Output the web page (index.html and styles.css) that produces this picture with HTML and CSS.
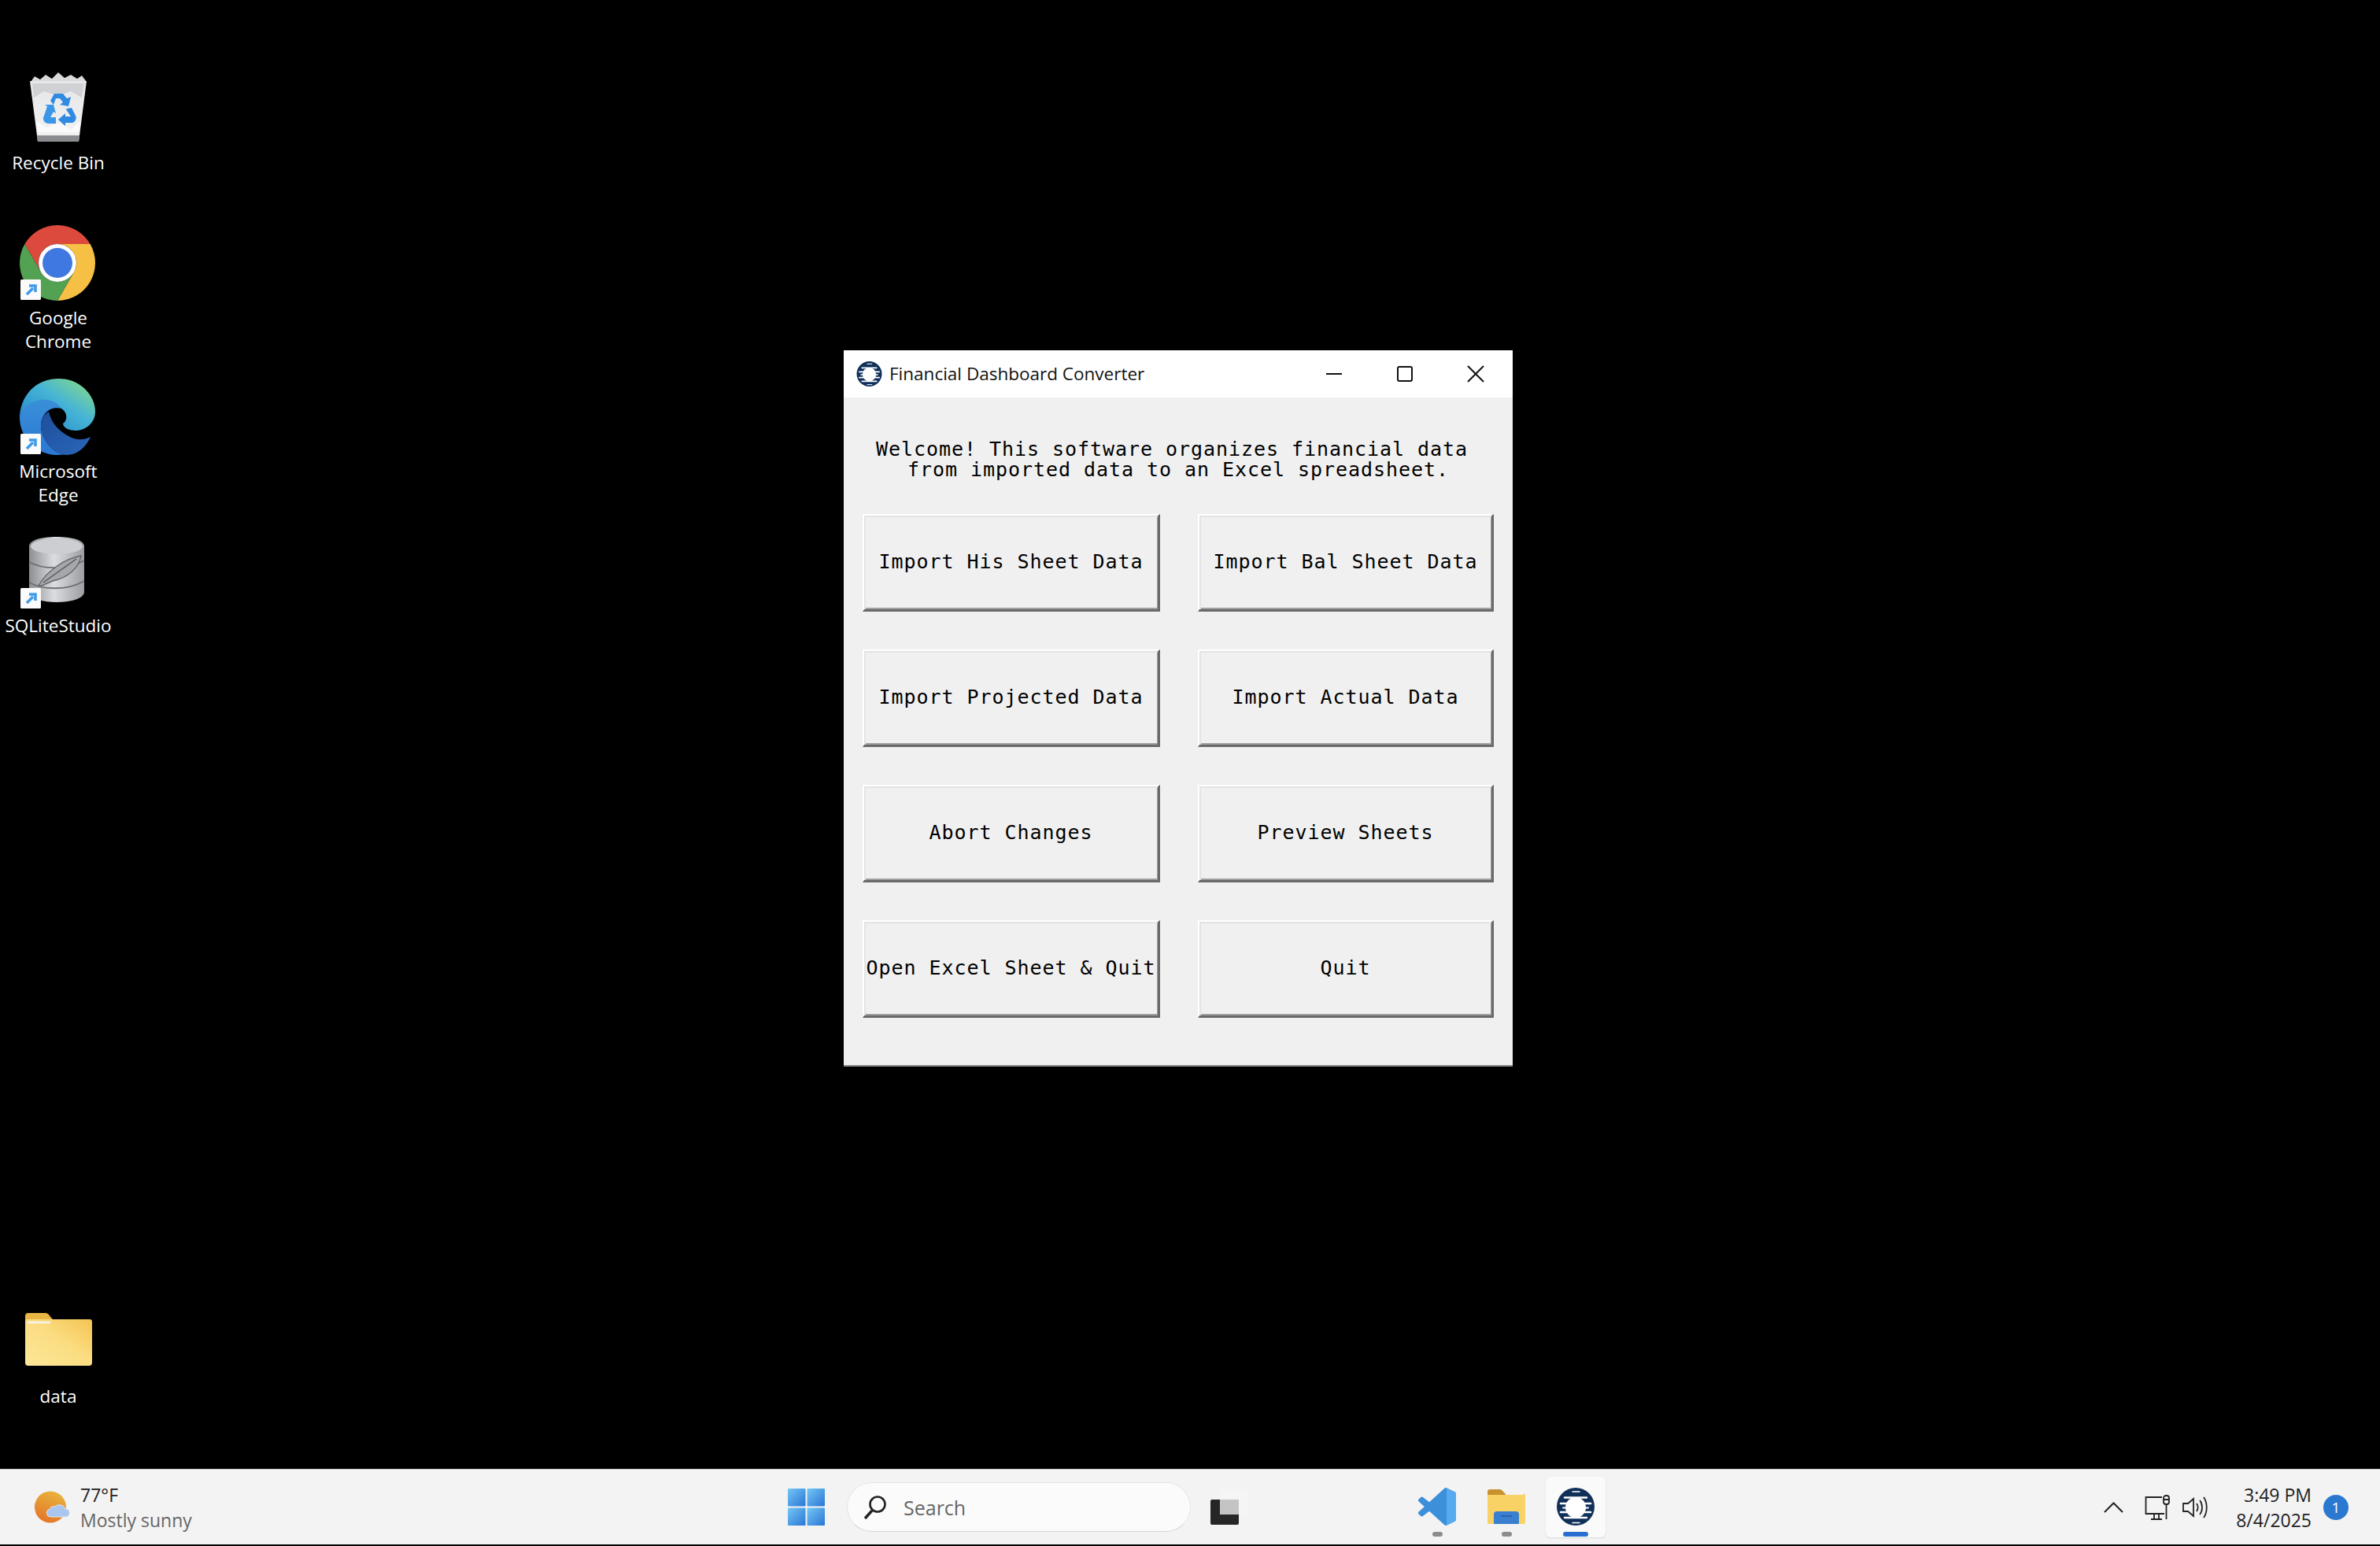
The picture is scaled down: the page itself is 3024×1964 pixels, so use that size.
FILE: index.html
```html
<!DOCTYPE html>
<html lang="en">

<head>
    <meta charset="utf-8">
    <title>Financial Dashboard Converter</title>
    <link rel="stylesheet" href="styles.css">
</head>

<body>
    <svg class="defs" width="0" height="0">
        <defs>
            <linearGradient id="edgeTop" x1="0" y1="1" x2="1" y2="0">
                <stop offset="0" stop-color="#1f7fc8"/>
                <stop offset="0.55" stop-color="#45b4d6"/>
                <stop offset="1" stop-color="#8fe07c"/>
            </linearGradient>
            <linearGradient id="edgeBody" x1="0" y1="0" x2="0" y2="1">
                <stop offset="0" stop-color="#3a8fd8"/>
                <stop offset="1" stop-color="#2a78d4"/>
            </linearGradient>
            <linearGradient id="edgeArm" x1="0" y1="0" x2="1" y2="1">
                <stop offset="0" stop-color="#1d4f9c"/>
                <stop offset="1" stop-color="#2b66b8"/>
            </linearGradient>
            <linearGradient id="binGlass" x1="0" y1="0" x2="0" y2="1">
                <stop offset="0" stop-color="#e6e7e9"/>
                <stop offset="1" stop-color="#f2f2f3"/>
            </linearGradient>
            <linearGradient id="dbBody" x1="0" y1="0" x2="1" y2="0">
                <stop offset="0" stop-color="#8d8e93"/>
                <stop offset="0.45" stop-color="#dcdde1"/>
                <stop offset="1" stop-color="#9c9da2"/>
            </linearGradient>
            <linearGradient id="folderFront" x1="0" y1="1" x2="1" y2="0">
                <stop offset="0" stop-color="#fde79a"/>
                <stop offset="0.55" stop-color="#fbdc80"/>
                <stop offset="1" stop-color="#f4c452"/>
            </linearGradient>
            <linearGradient id="sunDisc" x1="0.7" y1="0" x2="0.3" y2="1">
                <stop offset="0" stop-color="#e8b53c"/>
                <stop offset="1" stop-color="#e4742a"/>
            </linearGradient>
            <linearGradient id="startPane" x1="0" y1="0" x2="1" y2="1">
                <stop offset="0" stop-color="#74c7f5"/>
                <stop offset="1" stop-color="#2a76d4"/>
            </linearGradient>
            <symbol id="shortcut" viewBox="0 0 26 26">
                <rect width="26" height="26" rx="1.5" fill="#fbfbfb"/>
                <path d="M8 19 16 11M11 8h8v8" fill="none" stroke="#3f9be8" stroke-width="3.6"/>
            </symbol>
            <symbol id="fdcLogo" viewBox="0 0 48 48">
                <circle cx="24" cy="24" r="24" fill="#10305a"/>
                <ellipse cx="24" cy="25" rx="13" ry="13" fill="#fff"/>
                <g stroke="#fff" stroke-linecap="round" fill="none">
                    <path d="M20 5h9" stroke-width="1.500"/>
                    <path d="M10 12.500h28" stroke-width="2.400"/>
                    <path d="M5 20h38" stroke-width="2.600"/>
                    <path d="M8 25.500h32" stroke-width="2"/>
                    <path d="M5 31h38" stroke-width="2.600"/>
                    <path d="M10 38h28" stroke-width="2.400"/>
                    <path d="M20 44.500h9" stroke-width="1.500"/>
                </g>
            </symbol>
        </defs>
    </svg>

    <main class="desktop">
        <div class="desk-icon bin">
            <svg width="72" height="88" viewBox="0 0 72 88">
                <path d="M1 12 6 5l7 4 7-6 8 5 8-8 8 7 8-4 8 5 6-4 6 8-4 4H5z" fill="#d9dadc"/>
                <path d="M0 11h72l-10 77H10z" fill="url(#binGlass)"/>
                <path d="M3 14h66l-3 18-14-8-16 6-18-6-13 8z" fill="#cfd1d4"/>
                <path d="M8 62l14 8 14-6 16 8 12-10-2 14H10z" fill="#fafafa"/>
                <path d="M9 80h54l-1 8H10z" fill="#8b8c8f"/>
                <path d="M26 36 31 27h11l5 6 5-2-3 12-11-2 4-3-4-5h-5l-3 8z" fill="#2f8ae0"/>
                <path d="M22 43l-3-2 11 0 3 11-3-2-4 7h7v8h-9c-5 0-9-5-6-10z" fill="#3a96e6"/>
                <path d="M47 46l6-1 5 10c2 4-1 9-5 9h-8v4l-9-8 9-8v4h7l-6-9z" fill="#2f8ae0"/>
            </svg>
            <span>Recycle Bin</span>
        </div>

        <div class="desk-icon chrome">
            <svg width="98" height="97" viewBox="0 0 98 97">
                <path d="M48 24H89.570A48 48 0 0 0 6.430 24L27.200 60A24 24 0 0 1 48 24Z" fill="#db4a3c"/>
                <path d="M48 24H89.570A48 48 0 0 1 48 96L68.800 60A24 24 0 0 0 48 24Z" fill="#f5c043"/>
                <path d="M6.430 24A48 48 0 0 0 48 96L68.800 60A24 24 0 0 1 27.200 60Z" fill="#53a253"/>
                <circle cx="48" cy="48" r="24" fill="#fff"/>
                <circle cx="48" cy="48" r="19" fill="#3f78e0"/>
                <use href="#shortcut" x="1" y="69" width="26" height="26"/>
            </svg>
            <span>Google<br>Chrome</span>
        </div>

        <div class="desk-icon edge">
            <svg width="98" height="97" viewBox="0 0 98 97">
                <path d="M0 47C2 19 23 0 49 0C78 0 96 22 96 42C96 56 84 66 71 66C62 66 55 62 55 57C61 53 61 43 53 38C38 26 12 28 0 47Z" fill="url(#edgeTop)"/>
                <path d="M0 47C8 26 40 18 53 38C38 34 27 46 27 60C27 76 40 92 58 96C52 97 48 97 46 97C20 96 -1 74 0 47Z" fill="url(#edgeBody)"/>
                <path d="M37 42C30 46 27 52 27 60C27 78 42 97 60 97C72 97 84 88 90 74C82 78 72 79 62 73C50 67 40 56 37 42Z" fill="url(#edgeArm)"/>
                <use href="#shortcut" x="1" y="70" width="26" height="26"/>
            </svg>
            <span>Microsoft<br>Edge</span>
        </div>

        <div class="desk-icon sqlite">
            <svg width="98" height="91" viewBox="0 0 98 91">
                <path d="M12 12C12 4 28 0 47 0S82 4 82 12V70C82 78 66 83 47 83S12 78 12 70Z" fill="url(#dbBody)"/>
                <ellipse cx="47" cy="12" rx="33" ry="10" fill="#cdced2"/>
                <path d="M12 32C30 42 62 42 82 30M12 58C30 68 62 68 82 56" fill="none" stroke="#6f7074" stroke-width="2"/>
                <path d="M24 62C34 44 56 28 78 24C76 38 62 52 42 56L28 62Z" fill="#a6a7ab" stroke="#66676b" stroke-width="1.500"/>
                <path d="M30 58 72 28" stroke="#55565a" stroke-width="1.500"/>
                <use href="#shortcut" x="1" y="65" width="26" height="26"/>
            </svg>
            <span>SQLiteStudio</span>
        </div>

        <div class="desk-icon folder">
            <svg width="85" height="67" viewBox="0 0 85 67">
                <path d="M0 4A4 4 0 0 1 4 0H26C29 0 30 2 33 6L36 9H30V20H0Z" fill="#e9b643"/>
                <path d="M0 11A3 3 0 0 1 3 8H82A3 3 0 0 1 85 11V63A4 4 0 0 1 81 67H4A4 4 0 0 1 0 63Z" fill="url(#folderFront)"/>
                <path d="M3 12H32" stroke="#f4f3ee" stroke-width="2.500"/>
            </svg>
            <span>data</span>
        </div>

        <section class="app-window">
            <header class="title-bar">
                <svg class="title-logo" width="33" height="32"><use href="#fdcLogo"/></svg>
                <span class="title-text">Financial Dashboard Converter</span>
                <div class="title-controls">
                    <button class="control">
                        <svg width="20" height="20" viewBox="0 0 20 20"><path d="M0 10H20" stroke="#111" stroke-width="2"/></svg>
                    </button>
                    <button class="control">
                        <svg width="20" height="20" viewBox="0 0 20 20"><rect x="1" y="1" width="18" height="18" rx="2" fill="none" stroke="#111" stroke-width="2"/></svg>
                    </button>
                    <button class="control">
                        <svg width="22" height="22" viewBox="0 0 22 22"><path d="M1 1 21 21M21 1 1 21" stroke="#111" stroke-width="2"/></svg>
                    </button>
                </div>
            </header>

            <div class="window-body">
                <p class="welcome">Welcome! This software organizes financial data 
from imported data to an Excel spreadsheet.</p>
                <div class="button-grid">
                    <button class="tk-button">Import His Sheet Data</button>
                    <button class="tk-button">Import Bal Sheet Data</button>
                    <button class="tk-button">Import Projected Data</button>
                    <button class="tk-button">Import Actual Data</button>
                    <button class="tk-button">Abort Changes</button>
                    <button class="tk-button">Preview Sheets</button>
                    <button class="tk-button">Open Excel Sheet &amp; Quit</button>
                    <button class="tk-button">Quit</button>
                </div>
            </div>
        </section>
    </main>

    <footer class="taskbar">
        <div class="weather">
            <svg width="44" height="41" viewBox="0 0 44 41">
                <circle cx="20" cy="20.500" r="20" fill="url(#sunDisc)"/>
                <path d="M20 33a5 5 0 0 1-1-9.800 6 6 0 0 1 7-3.200 8 8 0 0 1 13 3 5 5 0 0 1 1 10Z" fill="#a9c6ee" stroke="#dfe8f5" stroke-width="1"/>
            </svg>
            <div class="weather-text">
                <span class="temp">77°F</span>
                <span class="sky">Mostly sunny</span>
            </div>
        </div>

        <svg class="start" width="47" height="47" viewBox="0 0 47 47">
            <rect width="22.500" height="22.500" rx="1" fill="url(#startPane)"/>
            <rect x="24.500" width="22.500" height="22.500" rx="1" fill="url(#startPane)"/>
            <rect y="24.500" width="22.500" height="22.500" rx="1" fill="url(#startPane)"/>
            <rect x="24.500" y="24.500" width="22.500" height="22.500" rx="1" fill="url(#startPane)"/>
        </svg>

        <div class="search-box">
            <svg width="30" height="32" viewBox="0 0 30 32">
                <circle cx="18" cy="12" r="9.500" fill="none" stroke="#222" stroke-width="2.600"/>
                <path d="M11 20 2 30" stroke="#222" stroke-width="3.400"/>
            </svg>
            <span>Search</span>
        </div>

        <svg class="task-view" width="48" height="45" viewBox="0 0 48 45">
            <rect y="13" width="36" height="32" rx="2" fill="#262626"/>
            <rect x="12" width="36" height="32" rx="2" fill="#f5f5f5"/>
            <rect x="12" y="13" width="24" height="19" fill="#c4c4c4"/>
        </svg>

        <div class="app-tiles">
            <div class="tile">
                <svg width="48" height="48" viewBox="0 0 100 100">
                    <path d="M70.900 99.300a6.200 6.200 0 0 0 5-.2l20.600-9.900a6.200 6.200 0 0 0 3.500-5.600V16.400a6.200 6.200 0 0 0-3.500-5.600L75.900.9a6.200 6.200 0 0 0-7.100 1.200L29.400 38 12.200 25a4.200 4.200 0 0 0-5.300.2l-5.500 5a4.200 4.200 0 0 0 0 6.200L16.300 50 1.400 63.600a4.200 4.200 0 0 0 0 6.200l5.500 5a4.200 4.200 0 0 0 5.300.2l17.200-13 39.400 36a6.200 6.200 0 0 0 2.100 1.300zM75 27.300 45.100 50 75 72.700z" fill="#3c8fd9"/>
                    <path d="M75 0a6 6 0 0 1 .9.900l20.600 9.900a6.200 6.200 0 0 1 3.500 5.600v67.200a6.200 6.200 0 0 1-3.500 5.600l-20.600 9.900a6.200 6.200 0 0 1-5 .2c2.300 .9 4.100-.9 4.100-3.400z" fill="#55aaf0"/>
                </svg>
                <i class="dot"></i>
            </div>
            <div class="tile">
                <svg width="48" height="48" viewBox="0 0 48 48">
                    <path d="M0 5A3 3 0 0 1 3 2H15C18 2 19 4 21 6L23 8V12H0Z" fill="#c8922e"/>
                    <path d="M0 9H45A3 3 0 0 1 48 8V44A2 2 0 0 1 46 46H2A2 2 0 0 1 0 44Z" fill="#f8d264"/>
                    <path d="M8 46V34A4 4 0 0 1 12 30H36A4 4 0 0 1 40 34V46Z" fill="#3a7fd0"/>
                    <path d="M17 36H31" stroke="#2a62ad" stroke-width="2"/>
                </svg>
                <i class="dot"></i>
            </div>
            <div class="tile active">
                <svg width="48" height="48"><use href="#fdcLogo"/></svg>
                <i class="dot"></i>
            </div>
        </div>

        <div class="tray">
            <svg class="chevron" width="25" height="14" viewBox="0 0 25 14">
                <path d="M1 13 12.500 1.500 24 13" fill="none" stroke="#222" stroke-width="2"/>
            </svg>
            <svg class="network" width="33" height="32" viewBox="0 0 33 32">
                <path d="M22 3H1.500V24H25M8 31H22M12 24V31M18 24V31" fill="none" stroke="#222" stroke-width="1.800"/>
                <rect x="24" y="1" width="7" height="11" rx="3" fill="none" stroke="#222" stroke-width="1.800"/>
                <path d="M24 6H31M27.500 12V31" fill="none" stroke="#222" stroke-width="1.800"/>
            </svg>
            <svg class="speaker" width="33" height="28" viewBox="0 0 33 28">
                <path d="M1 9H7L14 3V25L7 19H1Z" fill="none" stroke="#222" stroke-width="1.800"/>
                <path d="M18 9C20 12 20 16 18 19M22 5C26 10 26 18 22 23M27 1C32 8 32 20 27 27" fill="none" stroke="#222" stroke-width="1.800"/>
            </svg>
            <div class="clock">
                <span>3:49 PM</span>
                <span>8/4/2025</span>
            </div>
            <span class="badge">1</span>
        </div>
    </footer>
</body>

</html>
```

FILE: styles.css
```css
* {
    margin: 0;
    padding: 0;
    box-sizing: border-box;
}

body {
    width: 3024px;
    height: 1964px;
    display: flex;
    flex-direction: column;
    overflow: hidden;
    background: #000;
    font-family: "Open Sans", "Noto Sans", sans-serif;
}

.defs {
    position: absolute;
}

.desktop {
    position: relative;
    flex: 1;
}

/* desktop icons */
.desk-icon {
    position: absolute;
    left: 0;
    width: 148px;
    display: flex;
    flex-direction: column;
    align-items: center;
    color: #fff;
    font-size: 22.500px;
    line-height: 30px;
    text-align: center;
}

.bin { top: 92px; }
.bin span { margin-top: 12px; }
.chrome { top: 286px; }
.chrome span { margin-top: 6px; }
.edge { top: 481px; }
.edge span { margin-top: 6px; }
.sqlite { top: 682px; }
.sqlite span { margin-top: 7px; }
.folder { top: 1668px; }
.folder span { margin-top: 24px; }

/* the converter window */
.app-window {
    position: absolute;
    left: 1072px;
    top: 445px;
    width: 850px;
    height: 910px;
    background: #f0f0f0;
    border-bottom: 2px solid #8a8a8a;
}

.title-bar {
    height: 60px;
    display: flex;
    align-items: center;
    padding-left: 16px;
    padding-bottom: 1px;
    background: #fff;
}

.title-text {
    margin-left: 9px;
    font-size: 22.500px;
    color: #111;
}

.title-controls {
    display: flex;
    margin-left: auto;
    padding-right: 2px;
}

.control {
    width: 90px;
    height: 60px;
    display: flex;
    align-items: center;
    justify-content: center;
    border: none;
    background: none;
}

.window-body {
    padding: 53px 24px 0 24px;
}

.welcome {
    white-space: pre;
    text-align: center;
    font-family: "DejaVu Sans Mono", monospace;
    font-size: 25px;
    letter-spacing: 0.950px;
    line-height: 26px;
    color: #000;
}

.button-grid {
    display: grid;
    grid-template-columns: 378px 376px;
    grid-auto-rows: 124px;
    column-gap: 48px;
    row-gap: 48px;
    margin-top: 43px;
}

.tk-button {
    padding-bottom: 2px;
    background: #f0f0f0;
    border-style: solid;
    border-width: 2px 3px 3px 2px;
    border-color: #fff #696969 #696969 #fff;
    box-shadow: inset 2px 2px 0 #e3e3e3, inset -1px -2px 0 #a0a0a0;
    font-family: "DejaVu Sans Mono", monospace;
    font-size: 25px;
    letter-spacing: 0.950px;
    white-space: nowrap;
    color: #000;
}

/* taskbar */
.taskbar {
    height: 98px;
    display: flex;
    align-items: center;
    background: #f3f3f3;
    border-top: 1px solid #d0d0d0;
    border-bottom: 2px solid #000;
}

.weather {
    width: 1001px;
    padding-left: 44px;
    display: flex;
    align-items: center;
    gap: 14px;
}

.weather-text {
    display: flex;
    flex-direction: column;
    line-height: 32px;
    font-size: 23px;
}

.temp { color: #222; }
.sky { color: #666; }

.search-box {
    width: 437px;
    height: 63px;
    margin-left: 28px;
    padding-left: 20px;
    display: flex;
    align-items: center;
    gap: 21px;
    background: #fbfbfb;
    border: 1px solid #e5e5e5;
    border-bottom-color: #d4d4d4;
    border-radius: 32px;
    font-size: 25px;
    color: #666;
}

.task-view {
    margin-left: 25px;
}

.app-tiles {
    display: flex;
    gap: 12px;
    margin-left: 202px;
}

.tile {
    width: 76px;
    height: 77px;
    padding-top: 14px;
    display: flex;
    flex-direction: column;
    align-items: center;
    gap: 8px;
    border-radius: 6px;
}

.tile.active {
    background: #fafafa;
    box-shadow: 0 1px 2px #d8d8d8;
}

.dot {
    width: 13px;
    height: 6px;
    border-radius: 3px;
    background: #8c8c8c;
}

.active .dot {
    width: 32px;
    background: #2a6fd0;
}

.tray {
    display: flex;
    align-items: center;
    margin-left: 633px;
}

.network { margin-left: 27px; }
.speaker { margin-left: 15px; }

.clock {
    width: 131px;
    display: flex;
    flex-direction: column;
    align-items: flex-end;
    line-height: 32px;
    font-size: 23px;
    color: #222;
}

.badge {
    width: 32px;
    height: 32px;
    margin-left: 15px;
    display: flex;
    align-items: center;
    justify-content: center;
    border-radius: 50%;
    background: #2b78d0;
    color: #fff;
    font-size: 19px;
}
```
